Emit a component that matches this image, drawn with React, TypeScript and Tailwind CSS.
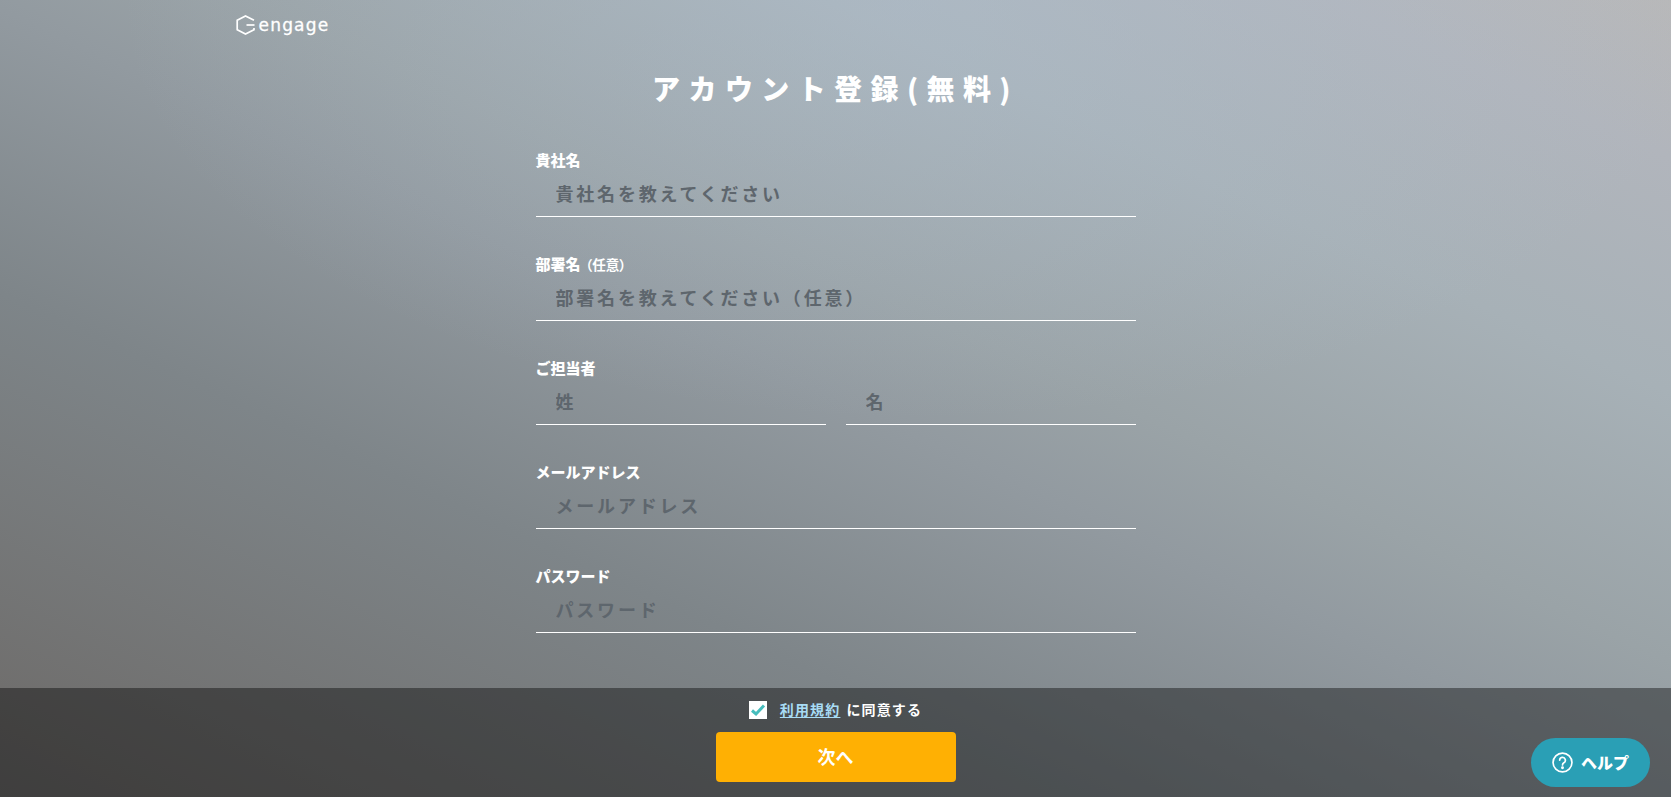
import React from "react";

const fontCls = "font-['Noto_Sans_CJK_JP','Noto_Sans',sans-serif]";

function Field({ placeholder, type = "text" }: { placeholder: string; type?: string }) {
  return (
    <input
      type={type}
      placeholder={placeholder}
      className="w-full h-[50px] pt-[2px] bg-transparent border-b border-white pl-5 text-[18px] font-bold tracking-[2.8px] text-[#333] outline-none placeholder:text-[#5e666d] placeholder:opacity-100"
    />
  );
}

function Group({ label, small, children }: { label: string; small?: string; children: React.ReactNode }) {
  return (
    <div className="mb-[37px]">
      <label className="block h-[17px] leading-[19px] text-[15px] font-black text-white">
        {label}
        {small && <span className="text-[13.5px] ml-[5px] font-bold [font-feature-settings:'palt']">（{small}）</span>}
      </label>
      {children}
    </div>
  );
}

export default function App() {
  return (
    <div
      className={`${fontCls} relative h-screen overflow-hidden flex flex-col bg-[radial-gradient(ellipse_800px_420px_at_55%_0%,rgba(176,192,208,0.45),rgba(176,192,208,0)),linear-gradient(25deg,#6a6968_0%,#706f6e_7%,#7e8589_32%,#929aa0_50%,#9aa3a7_58%,#a7b1b7_75%,#b1b5bc_90%,#b8b8b9_100%)]`}
    >
      <main className="relative flex-1 flex flex-col">
        <header className="w-[1200px] mx-auto h-[50px] pt-[15px] flex items-start">
          <div className="flex items-center h-[20px]">
            <svg width="19" height="20" viewBox="0 0 19 20" fill="none" stroke="white" strokeWidth="1.7">
              <path d="M18 5.3 L9.5 1 L1.2 5.3 V14.7 L9.5 19 L18 14.7 V13" />
              <path d="M10.5 10 H18.5" />
            </svg>
            <span className="font-['DejaVu_Sans',sans-serif] text-[17px] leading-[20px] text-white tracking-[1.2px] ml-[4px] [-webkit-text-stroke:0.3px_white]">
              engage
            </span>
          </div>
        </header>
        <h1 className="mt-[15px] h-[46px] leading-[46px] text-center text-[28px] font-black tracking-[8.4px] text-white">
          アカウント登録(無料)
        </h1>
        <form className="w-[600px] mx-auto mt-[39px]">
          <Group label="貴社名">
            <Field placeholder="貴社名を教えてください" />
          </Group>
          <Group label="部署名" small="任意">
            <Field placeholder="部署名を教えてください（任意）" />
          </Group>
          <Group label="ご担当者">
            <div className="flex gap-5">
              <Field placeholder="姓" />
              <Field placeholder="名" />
            </div>
          </Group>
          <Group label="メールアドレス">
            <Field placeholder="メールアドレス" />
          </Group>
          <Group label="パスワード">
            <Field placeholder="パスワード" />
          </Group>
        </form>
      </main>
      <footer className="relative h-[109px] bg-black/40 flex flex-col items-center pt-[13px]">
        <div className="flex items-center h-[18px]">
          <span className="w-[18px] h-[18px] bg-white flex items-center justify-center">
            <svg width="16" height="14" viewBox="0 0 16 14" fill="none" stroke="#47bdbd" strokeWidth="3">
              <path d="M2 7.5 L6 11 L14 2.5" />
            </svg>
          </span>
          <span className="ml-[13px] text-[14px] font-bold tracking-[1.15px] text-white leading-[16px] pb-[2px]">
            <a className="text-[#a8dcf5] underline underline-offset-2">利用規約</a>
            <span className="ml-[6px]">に同意する</span>
          </span>
        </div>
        <button className="mt-[13px] w-[240px] h-[50px] pb-[2px] rounded bg-[#ffb003] text-white text-[18px] font-bold">
          次へ
        </button>
      </footer>
      <button className="absolute left-[1531px] top-[738px] w-[119px] h-[49px] rounded-full bg-[#2a9fb5] text-white flex items-center justify-center gap-[8px] text-[16px] font-black">
        <svg width="21" height="21" viewBox="0 0 20 20" fill="none" stroke="white" strokeWidth="1.6">
          <circle cx="10" cy="10" r="9" />
          <path d="M7.3 7.8 A2.7 2.7 0 1 1 11.3 10.2 C10.4 10.8 10 11.2 10 12.3" strokeLinecap="round" />
          <circle cx="10" cy="15" r="0.6" fill="white" />
        </svg>
        <span className="-mt-[2px]">ヘルプ</span>
      </button>
    </div>
  );
}
